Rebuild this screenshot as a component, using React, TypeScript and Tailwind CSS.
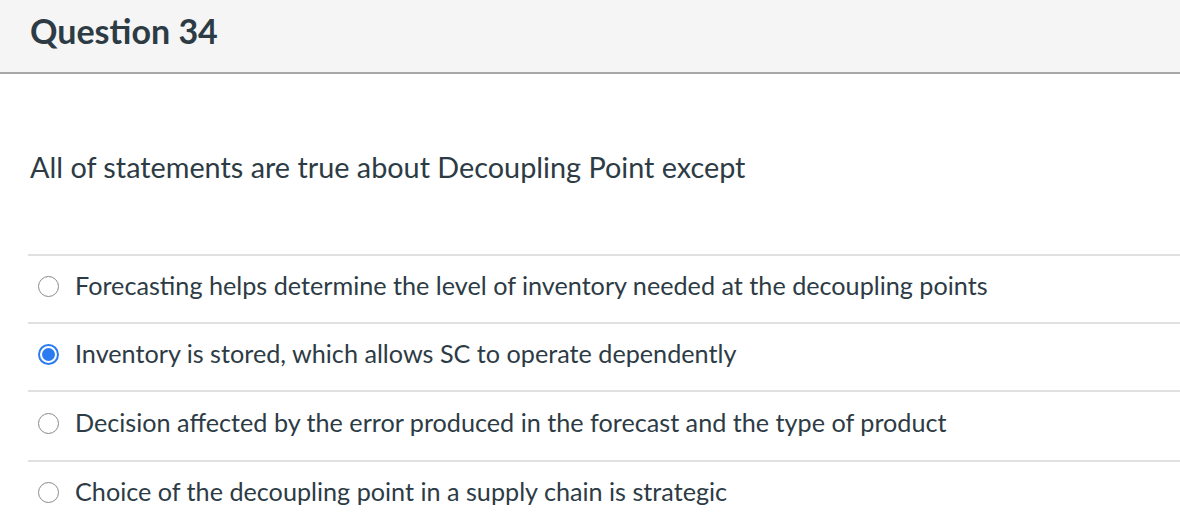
const answers = [
  { text: 'Forecasting helps determine the level of inventory needed at the decoupling points', checked: false },
  { text: 'Inventory is stored, which allows SC to operate dependently', checked: true },
  { text: 'Decision affected by the error produced in the forecast and the type of product', checked: false },
  { text: 'Choice of the decoupling point in a supply chain is strategic', checked: false },
]

function Radio({ checked }: { checked: boolean }) {
  if (checked) {
    return (
      <span className="flex h-[21px] w-[21px] shrink-0 items-center justify-center rounded-full border-2 border-[#2b7bf0] bg-white">
        <span className="h-[13px] w-[13px] rounded-full bg-[#2b7bf0]" />
      </span>
    )
  }
  return <span className="h-[21px] w-[21px] shrink-0 rounded-full border-[1.5px] border-[#8a8a8a] bg-white" />
}

export default function App() {
  return (
    <div className="h-[524px] w-[1180px] overflow-hidden bg-white font-['Lato',sans-serif] text-[#2d3b45]">
      <div className="flex h-[74px] items-center border-b-2 border-[#a8a8a8] bg-[#f5f5f5] pb-[10px] pl-[30px]">
        <h2 className="text-[34px] font-bold leading-none">Question 34</h2>
      </div>
      <div className="pl-[28px]">
        <p className="pt-[76px] pl-[2px] text-[28.8px] leading-[34px]">
          All of statements are true about Decoupling Point except
        </p>
        <div className="mt-[70px]">
          {answers.map((a, i) => (
            <div
              key={i}
              className={`flex items-center gap-[16px] border-t-2 border-[#e0e0e0] pb-[6px] pl-[10px] ${i === 2 ? 'h-[70px]' : 'h-[68px]'}`}
            >
              <Radio checked={a.checked} />
              <span className="text-[25.2px] leading-none">{a.text}</span>
            </div>
          ))}
        </div>
      </div>
    </div>
  )
}
